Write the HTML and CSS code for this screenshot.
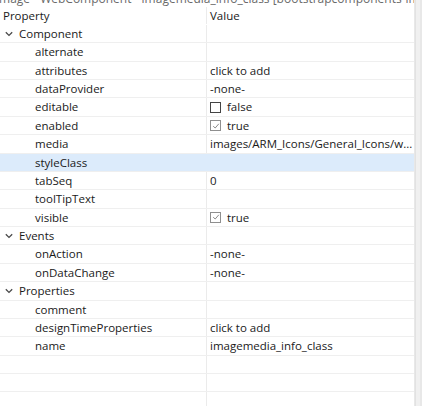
FILE: index.html
```html
<!DOCTYPE html>
<html>
<head>
<meta charset="utf-8">
<link rel="stylesheet" href="styles.css">
</head>
<body>
<div class="window">
  <div class="table">
    <div class="title"><span>image - WebComponent - imagemedia_info_class [bootstrapcomponents-image] - Properties view</span></div>
    <div class="row head"><div class="c1">Property</div><div class="c2">Value</div></div>

    <div class="row cat"><div class="c1"><svg class="chev" width="8" height="6" viewBox="0 0 8 6"><path d="M0.8 1.2 L4 4.4 L7.2 1.2" fill="none" stroke="#4a4a4a" stroke-width="1.3"/></svg>Component</div><div class="c2"></div></div>
    <div class="row"><div class="c1 prop">alternate</div><div class="c2"></div></div>
    <div class="row"><div class="c1 prop">attributes</div><div class="c2">click to add</div></div>
    <div class="row"><div class="c1 prop">dataProvider</div><div class="c2">-none-</div></div>
    <div class="row"><div class="c1 prop">editable</div><div class="c2"><span class="box off"></span>false</div></div>
    <div class="row"><div class="c1 prop">enabled</div><div class="c2"><span class="box on"><svg width="8" height="8" viewBox="0 0 8 8"><path d="M1.2 4.2 L3.2 6 L6.8 1.8" fill="none" stroke="#8a8a8a" stroke-width="1"/></svg></span>true</div></div>
    <div class="row"><div class="c1 prop">media</div><div class="c2 ell">images/ARM_Icons/General_Icons/w...</div></div>
    <div class="row sel"><div class="c1 prop">styleClass</div><div class="c2"></div></div>
    <div class="row"><div class="c1 prop">tabSeq</div><div class="c2">0</div></div>
    <div class="row"><div class="c1 prop">toolTipText</div><div class="c2"></div></div>
    <div class="row"><div class="c1 prop">visible</div><div class="c2"><span class="box on"><svg width="8" height="8" viewBox="0 0 8 8"><path d="M1.2 4.2 L3.2 6 L6.8 1.8" fill="none" stroke="#8a8a8a" stroke-width="1"/></svg></span>true</div></div>

    <div class="row cat"><div class="c1"><svg class="chev" width="8" height="6" viewBox="0 0 8 6"><path d="M0.8 1.2 L4 4.4 L7.2 1.2" fill="none" stroke="#4a4a4a" stroke-width="1.3"/></svg>Events</div><div class="c2"></div></div>
    <div class="row"><div class="c1 prop">onAction</div><div class="c2">-none-</div></div>
    <div class="row"><div class="c1 prop">onDataChange</div><div class="c2">-none-</div></div>

    <div class="row cat"><div class="c1"><svg class="chev" width="8" height="6" viewBox="0 0 8 6"><path d="M0.8 1.2 L4 4.4 L7.2 1.2" fill="none" stroke="#4a4a4a" stroke-width="1.3"/></svg>Properties</div><div class="c2"></div></div>
    <div class="row"><div class="c1 prop">comment</div><div class="c2"></div></div>
    <div class="row"><div class="c1 prop">designTimeProperties</div><div class="c2">click to add</div></div>
    <div class="row"><div class="c1 prop">name</div><div class="c2">imagemedia_info_class</div></div>
    <div class="row"><div class="c1"></div><div class="c2"></div></div>
    <div class="row"><div class="c1"></div><div class="c2"></div></div>
    <div class="row"><div class="c1"></div><div class="c2"></div></div>
  </div>
  <div class="scroll"></div>
</div>
</body>
</html>
```

FILE: styles.css
```css
html, body {
  margin: 0;
  padding: 0;
  background: #ffffff;
}
body {
  width: 422px;
  height: 406px;
  overflow: hidden;
  font-family: "Open Sans", "Noto Sans", sans-serif;
  font-size: 11.5px;
  color: #1a1a1a;
}
.window {
  display: flex;
  height: 406px;
}
.table {
  width: 415px;
  border-right: 1px solid #e8e8e8;
  box-sizing: border-box;
  overflow: hidden;
}
.scroll {
  flex: 1;
  background: #f0f0f0;
  border-left: 1px solid #e2e2e2;
  border-right: 2px solid #e8e8e8;
}
.title {
  height: 6.6px;
  overflow: hidden;
  white-space: nowrap;
  color: #6a6a6a;
  font-size: 12px;
  line-height: 12px;
}
.title span {
  display: block;
  margin-top: -7.2px;
  margin-left: -4px;
}
.row {
  display: grid;
  grid-template-columns: 207px 1fr;
  height: 18.375px;
  box-sizing: border-box;
  border-bottom: 1px solid #efefef;
  line-height: 17.375px;
  white-space: nowrap;
}
.row.head {
  border-bottom-color: transparent;
}
.c1 {
  border-right: 1px solid #ebebeb;
  padding-left: 3px;
  display: flex;
  align-items: center;
  overflow: hidden;
}
.c2 {
  padding-left: 3px;
  display: flex;
  align-items: center;
  overflow: hidden;
}
.prop {
  padding-left: 35px;
}
.cat .c1 {
  padding-left: 5px;
}
.chev {
  margin-right: 6px;
  flex: none;
}
.sel {
  background: #dcebfb;
}
.sel .c1 {
  border-right-color: #dcebfb;
}
.box {
  width: 11px;
  height: 11px;
  box-sizing: border-box;
  border: 1px solid #444;
  margin-right: 6px;
  background: #fff;
  display: flex;
  align-items: center;
  justify-content: center;
  flex: none;
}
.box.on {
  border-color: #8f8f8f;
}
```
